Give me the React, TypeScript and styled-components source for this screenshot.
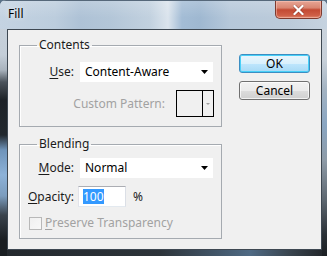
import styled, { createGlobalStyle } from 'styled-components';

const Global = createGlobalStyle`
  html, body { margin: 0; padding: 0; background: #5b7288; }
  body { font-family: 'Noto Sans', 'Segoe UI', 'Liberation Sans', sans-serif; font-size: 12px; color: #1b1b1b; }
`;

const Window = styled.div`
  width: 327px; height: 256px; box-sizing: border-box;
  display: flex; flex-direction: column;
  border-radius: 6px 6px 0 0; overflow: hidden;
  background:
    linear-gradient(to bottom, #c9d3dd 0px, #c4ced8 55px, #a9b3bd 70px, #4b535b 82px, #1d2227 100px, #22282e 135px, #6f94ba 150px, #8db2d8 175px, #7b9cbd 196px, #3a434c 215px, #1a1e22 240px) left top / 7px 100% no-repeat,
    linear-gradient(to bottom, #cdd6df 0px, #c7d0d9 60px, #a3b3c2 90px, #8aa6c2 125px, #8e9ba7 160px, #5d6770 200px, #2a3036 235px, #1b1f23 256px) right top / 5px 100% no-repeat,
    linear-gradient(to right, #23282d 0px, #2d343a 160px, #4f6a84 250px, #39444e 290px, #202428 327px);
`;

const TitleBar = styled.div`
  height: 29px; box-sizing: border-box;
  display: flex; justify-content: space-between; align-items: flex-start;
  padding-left: 8px;
  border-top: 1px solid #56687a;
  background:
    linear-gradient(to bottom, rgba(255,255,255,0.18), rgba(255,255,255,0) 60%),
    linear-gradient(to right, #c4d3e2 0px, #bccddd 55px, #aec2d6 80px, #b3c6d8 110px, #c2d1df 150px, #dbe4ed 168px, #a3bcd5 182px, #9fb8d1 200px, #b6c8da 230px, #bccbda 290px, #c6d3e0 327px);
`;

const Title = styled.span`
  padding-top: 5px; line-height: 16px; color: #000;
  text-shadow: 0 0 6px rgba(255,255,255,0.9);
`;

const CloseButton = styled.div`
  width: 47px; height: 18px; box-sizing: border-box; margin-right: 5px;
  display: flex; align-items: center; justify-content: center;
  border: 1px solid #7e3a2e; border-top: none; border-radius: 0 0 5px 5px;
  background: linear-gradient(to bottom, #e7a595 0%, #d98672 40%, #c34a33 52%, #cf5f47 85%, #e08a70 100%);
  box-shadow: inset 0 0 0 1px rgba(255,210,200,0.45);
`;

const Client = styled.div`
  flex: 1; box-sizing: border-box;
  margin: 0 5px 6px 7px;
  border: 1px solid #3e4852;
  background: #f0f0f0;
  padding: 7px 0 0 11px;
  display: flex; gap: 17px; align-items: flex-start;
`;

const Column = styled.div`
  display: flex; flex-direction: column; gap: 9px;
`;

const Group = styled.fieldset`
  margin: 0; padding: 0; min-width: 0;
  width: 203px; box-sizing: border-box;
  border: 1px solid #a5aab0;
  border-radius: 0;
  box-shadow: inset 1px 1px 0 #fff;
`;

const Legend = styled.legend`
  margin-left: 17px; padding: 0 2px;
  line-height: 16px; font-size: 12px; color: #1b1b1b;
`;

const GroupBody = styled.div<{ $top: number; $bottom: number }>`
  display: flex; flex-direction: column; gap: 8px;
  padding: ${({ $top }) => $top}px 7px ${({ $bottom }) => $bottom}px 0;
`;

const Row = styled.div<{ $gap?: number; $end?: boolean }>`
  display: flex; align-items: center;
  gap: ${({ $gap }) => $gap ?? 6}px;
  justify-content: ${({ $end }) => ($end ? 'flex-end' : 'flex-start')};
`;

const Label = styled.span<{ $disabled?: boolean }>`
  width: 54px; text-align: right; line-height: 16px; white-space: nowrap;
  color: ${({ $disabled }) => ($disabled ? '#a2a2a2' : '#1b1b1b')};
`;

const FreeLabel = styled.span<{ $disabled?: boolean }>`
  line-height: 16px; white-space: nowrap;
  color: ${({ $disabled }) => ($disabled ? '#a2a2a2' : '#1b1b1b')};
`;

const Key = styled.span`text-decoration: underline; text-underline-offset: 2px;`;

const Select = styled.div`
  width: 133px; height: 20px; box-sizing: border-box;
  background: #fff;
  display: flex; align-items: center; justify-content: space-between;
  padding: 0 5px 0 5px;
  color: #000; line-height: 16px;
`;

const PatternBox = styled.div`
  width: 38px; height: 27px; box-sizing: border-box;
  border: 1px solid #000; background: #f0f0f0;
  display: flex;
`;

const Swatch = styled.div`
  flex: 1; border-right: 1px solid #000;
`;

const PatternArrow = styled.div`
  width: 10px; display: flex; align-items: center; justify-content: center;
`;

const NumberInput = styled.div`
  width: 48px; height: 21px; box-sizing: border-box;
  background: #fff;
  border: 1px solid; border-color: #abadb3 #dbdfe6 #e3e9ef #e2e3ea;
  padding-left: 4px;
  display: flex; align-items: center;
`;

const Selected = styled.span`
  background: #3399ff; color: #fff; line-height: 15px;
`;

const CheckRow = styled.div`
  display: flex; align-items: center; gap: 3px; padding-left: 9px;
`;

const CheckBox = styled.div`
  width: 13px; height: 13px; box-sizing: border-box;
  border: 1px solid #b8b8b8;
  background: linear-gradient(135deg, #f0f0f0, #f8f8f8);
`;

const Buttons = styled.div`
  display: flex; flex-direction: column; gap: 8px; margin-top: 17px;
`;

const Button = styled.div<{ $default?: boolean }>`
  width: 71px; height: 19px; box-sizing: border-box;
  display: flex; align-items: center; justify-content: center;
  border-radius: 3px;
  border: 1px solid ${({ $default }) => ($default ? '#3c8ec2' : '#707070')};
  background: ${({ $default }) =>
    $default
      ? 'linear-gradient(to bottom, #eaf6fd 0%, #d9f0fc 50%, #bee6fd 51%, #a7d9f5 100%)'
      : 'linear-gradient(to bottom, #f2f2f2 0%, #ebebeb 50%, #dddddd 51%, #cfcfcf 100%)'};
  box-shadow: ${({ $default }) =>
    $default ? 'inset 0 0 0 1px #48d0f8' : 'inset 0 0 0 1px rgba(255,255,255,0.7)'};
  color: #000; line-height: 16px;
`;

const Arrow = () => (
  <svg width="7" height="4" viewBox="0 0 7 4"><polygon points="0,0 7,0 3.5,4" fill="#000" /></svg>
);

export default function App() {
  return (
    <>
      <Global />
      <Window>
        <TitleBar>
          <Title>Fill</Title>
          <CloseButton>
            <svg width="11" height="10" viewBox="0 0 11 10">
              <path d="M1.5 1 L9.5 9 M9.5 1 L1.5 9" stroke="#6b1c10" strokeWidth="3.4" strokeLinecap="square" opacity="0.5" />
              <path d="M1.5 1 L9.5 9 M9.5 1 L1.5 9" stroke="#fff" strokeWidth="2.2" strokeLinecap="square" />
            </svg>
          </CloseButton>
        </TitleBar>
        <Client>
          <Column>
            <Group>
              <Legend>Contents</Legend>
              <GroupBody $top={9} $bottom={9}>
                <Row>
                  <Label><Key>U</Key>se:</Label>
                  <Select>Content-Aware<Arrow /></Select>
                </Row>
                <Row $end $gap={11}>
                  <FreeLabel $disabled>Custom Pattern:</FreeLabel>
                  <PatternBox>
                    <Swatch />
                    <PatternArrow>
                      <svg width="4" height="2" viewBox="0 0 4 2"><polygon points="0,0 4,0 2,2" fill="#a0a0a0" /></svg>
                    </PatternArrow>
                  </PatternBox>
                </Row>
              </GroupBody>
            </Group>
            <Group>
              <Legend>Blending</Legend>
              <GroupBody $top={6} $bottom={7}>
                <Row>
                  <Label><Key>M</Key>ode:</Label>
                  <Select>Normal<Arrow /></Select>
                </Row>
                <Row $gap={4}>
                  <Label><Key>O</Key>pacity:</Label>
                  <NumberInput><Selected>100</Selected></NumberInput>
                  <FreeLabel style={{ marginLeft: 3 }}>%</FreeLabel>
                </Row>
                <CheckRow>
                  <CheckBox />
                  <FreeLabel $disabled><Key>P</Key>reserve Transparency</FreeLabel>
                </CheckRow>
              </GroupBody>
            </Group>
          </Column>
          <Buttons>
            <Button $default>OK</Button>
            <Button>Cancel</Button>
          </Buttons>
        </Client>
      </Window>
    </>
  );
}
